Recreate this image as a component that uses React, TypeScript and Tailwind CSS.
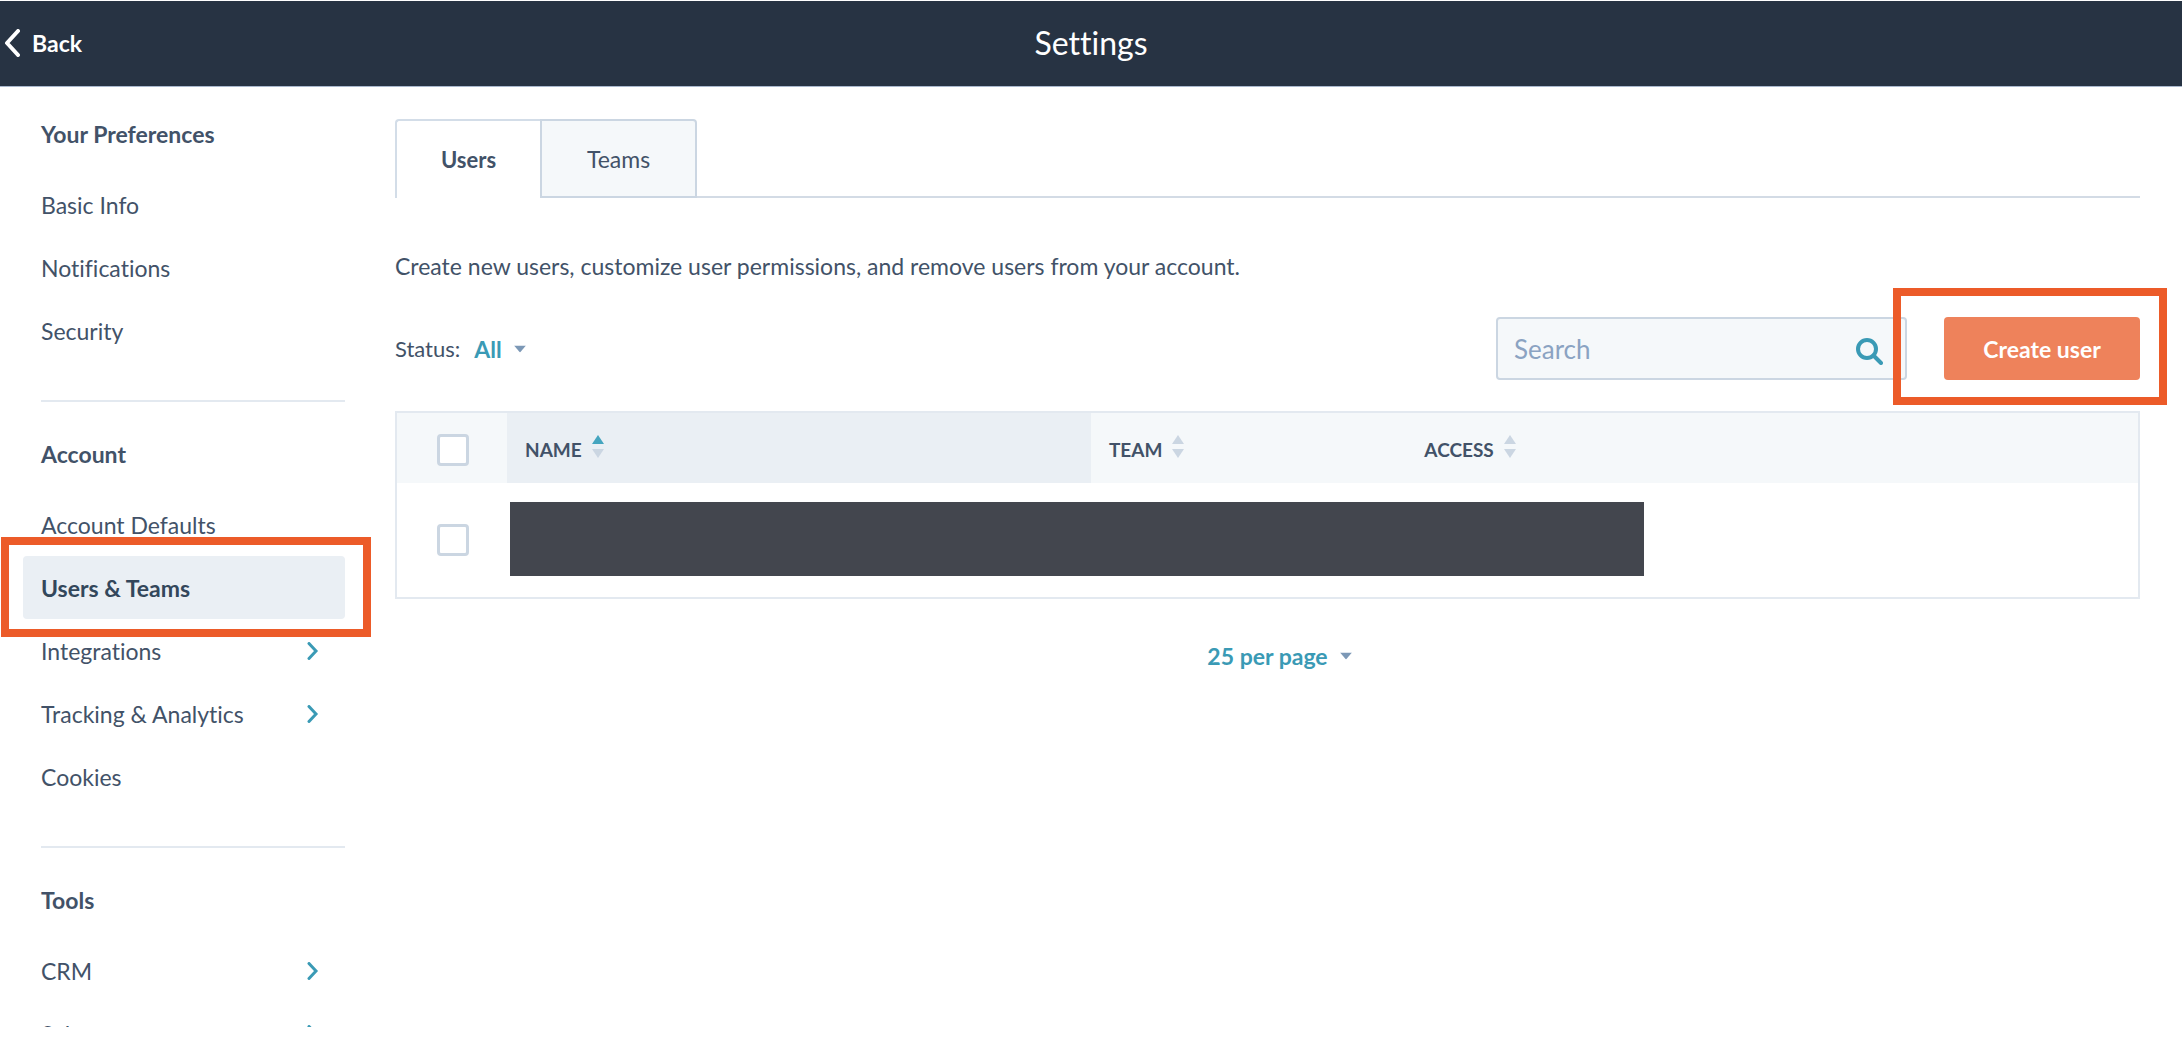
import React from "react";

type NavItem = { label: string; expandable?: boolean; active?: boolean };
type NavSection = { title: string; items: NavItem[] };

const sections: NavSection[] = [
  {
    title: "Your Preferences",
    items: [{ label: "Basic Info" }, { label: "Notifications" }, { label: "Security" }],
  },
  {
    title: "Account",
    items: [
      { label: "Account Defaults" },
      { label: "Users & Teams", active: true },
      { label: "Integrations", expandable: true },
      { label: "Tracking & Analytics", expandable: true },
      { label: "Cookies" },
    ],
  },
  {
    title: "Tools",
    items: [
      { label: "CRM", expandable: true },
      { label: "Sales", expandable: true },
    ],
  },
];

function ChevronRight() {
  return (
    <svg className="h-[18px] w-3" viewBox="0 0 12 18" fill="none" stroke="#3a9ab5" strokeWidth="3" aria-hidden="true">
      <path d="M2 1.5 9 9l-7 7.500" strokeLinecap="round" />
    </svg>
  );
}

function Caret() {
  return (
    <svg className="pointer-events-none absolute right-0 top-1/2 h-[7px] w-3 -translate-y-1/2" viewBox="0 0 12 7" aria-hidden="true">
      <path d="M0 0h12L6 7z" fill="#7c98b6" />
    </svg>
  );
}

function SortIcon({ ascending = false }: { ascending?: boolean }) {
  return (
    <svg className="mb-2 h-[23px] w-3" viewBox="0 0 12 23" aria-hidden="true">
      <path d="M6 0l6 9H0z" fill={ascending ? "#45a5bf" : "#cbd6e2"} />
      <path d="M6 23l6-9H0z" fill="#cbd6e2" />
    </svg>
  );
}

function Highlight({ className }: { className: string }) {
  return <span aria-hidden="true" className={`pointer-events-none absolute z-10 border-8 border-[#ec5b29] ${className}`} />;
}

function Checkbox({ label }: { label: string }) {
  return (
    <input
      type="checkbox"
      aria-label={label}
      className="block size-8 appearance-none rounded-[4px] border-[3px] border-[#cbd6e2] bg-white checked:bg-[#3a9ab5]"
    />
  );
}

function SortHeader({ label, ascending }: { label: string; ascending?: boolean }) {
  return (
    <th
      scope="col"
      aria-sort={ascending ? "ascending" : "none"}
      className={`h-[71px] px-[18px] text-left font-bold ${ascending ? "bg-[#eaeff4]" : ""}`}
    >
      <button type="button" className="flex items-center gap-[10px] pt-1">
        {label}
        <SortIcon ascending={ascending} />
      </button>
    </th>
  );
}

function Sidebar() {
  return (
    <nav aria-label="Settings" className="w-[345px] shrink-0 pl-[23px] pt-8">
      {sections.map((section, i) => (
        <section key={section.title}>
          {i > 0 && <hr className="mb-[37px] ml-[18px] mt-[38px] border-t-2 border-[#e3e9f0]" />}
          <h2 className="mb-6 pl-[18px] font-bold leading-[30px]">{section.title}</h2>
          <ul>
            {section.items.map((item) => (
              <li key={item.label} className="relative">
                <a
                  href="#"
                  aria-current={item.active ? "page" : undefined}
                  className={`flex h-[63px] items-center justify-between rounded-[4px] pl-[18px] pr-[26px] ${
                    item.active ? "bg-[#eaeff4] font-bold text-[#33475b]" : ""
                  }`}
                >
                  {item.label}
                  {item.expandable && <ChevronRight />}
                </a>
                {item.active && <Highlight className="-bottom-[18px] -left-[22px] -right-[26px] -top-[19px]" />}
              </li>
            ))}
          </ul>
        </section>
      ))}
    </nav>
  );
}

function UsersPanel() {
  return (
    <main className="min-w-0 flex-1 pl-[50px] pr-[42px] pt-8">
      <div role="tablist" className="flex h-[79px]">
        <button
          type="button"
          role="tab"
          aria-selected="true"
          className="w-[145px] rounded-tl-[4px] border-l-2 border-t-2 border-[#d3dde8] text-[22px] font-bold"
        >
          Users
        </button>
        <button
          type="button"
          role="tab"
          aria-selected="false"
          className="w-[157px] rounded-tr-[4px] border-2 border-[#cbd6e2] bg-[#f5f8fa]"
        >
          Teams
        </button>
        <div className="flex-1 border-b-2 border-[#d3dbe5]" />
      </div>

      <p className="mt-[53px] leading-[30px]">
        Create new users, customize user permissions, and remove users from your account.
      </p>

      <div className="mt-9 flex items-center">
        <label htmlFor="status" className="text-[22px]">
          Status:
        </label>
        <div className="relative ml-[14px]">
          <select
            id="status"
            defaultValue="All"
            className="block cursor-pointer appearance-none bg-transparent pr-6 font-bold text-[#3a9ab5] field-sizing-content"
          >
            <option>All</option>
          </select>
          <Caret />
        </div>

        <div className="relative ml-auto w-[411px]">
          <input
            type="search"
            aria-label="Search"
            placeholder="Search"
            className="block h-[63px] w-full rounded-[4px] border-2 border-[#cbd6e2] bg-[#f5f8fa] pl-4 pr-16 text-[26px] placeholder:text-[#8ba3c2]"
          />
          <svg
            className="pointer-events-none absolute right-6 top-[21px] size-[27px]"
            viewBox="0 0 27 27"
            fill="none"
            stroke="#3a9ab5"
            aria-hidden="true"
          >
            <circle cx="11" cy="11" r="9" strokeWidth="4" />
            <path d="M17.500 17.500 25 25" strokeWidth="4" strokeLinecap="round" />
          </svg>
        </div>

        <div className="relative ml-[37px]">
          <button type="button" className="block h-[63px] w-[196px] rounded-[4px] bg-[#ee825b] font-bold text-white">
            Create user
          </button>
          <Highlight className="-bottom-[25px] -left-[51px] -right-[27px] -top-[29px]" />
        </div>
      </div>

      <table className="mt-[31px] w-full table-fixed border-collapse border-2 border-[#e3e9f0]">
        <colgroup>
          <col className="w-[111px]" />
          <col className="w-[33.5%]" />
          <col className="w-[18.1%]" />
          <col />
        </colgroup>
        <thead className="bg-[#f5f8fa] text-[19px]">
          <tr>
            <th scope="col" className="pl-10 pt-1">
              <Checkbox label="Select all users" />
            </th>
            <SortHeader label="NAME" ascending />
            <SortHeader label="TEAM" />
            <SortHeader label="ACCESS" />
          </tr>
        </thead>
        <tbody>
          <tr>
            <td className="h-[115px] pl-10">
              <Checkbox label="Select user" />
            </td>
            <td colSpan={3}>
              <div className="mb-[2px] ml-[3px] h-[74px] w-[69.5%] bg-[#43464e]" />
            </td>
          </tr>
        </tbody>
      </table>

      <div className="mt-[42px] flex justify-center pl-6">
        <div className="relative">
          <select
            aria-label="Rows per page"
            defaultValue="25 per page"
            className="block cursor-pointer appearance-none bg-transparent pr-6 font-bold text-[#3a9ab5] field-sizing-content"
          >
            <option>25 per page</option>
          </select>
          <Caret />
        </div>
      </div>
    </main>
  );
}

export default function App() {
  return (
    <div className="flex h-screen flex-col bg-white pb-[11px] pt-px font-['Lato',sans-serif] text-[23px] leading-[30px] text-[#425268] [font-variant-ligatures:none]">
      <header className="grid h-[86px] shrink-0 grid-cols-[1fr_auto_1fr] items-center border-b border-[#a9b8cd] bg-[#273343] text-white">
        <a href="#" className="flex items-center gap-3 pb-[2px] pl-1 font-bold">
          <svg className="h-7 w-4" viewBox="0 0 16 28" fill="none" stroke="currentColor" strokeWidth="4" aria-hidden="true">
            <path d="M14 2 3 14l11 12" strokeLinecap="round" strokeLinejoin="round" />
          </svg>
          Back
        </a>
        <h1 className="pb-[2px] text-[32px] leading-10">Settings</h1>
      </header>
      <div className="flex min-h-0 flex-1 overflow-hidden">
        <Sidebar />
        <UsersPanel />
      </div>
    </div>
  );
}
